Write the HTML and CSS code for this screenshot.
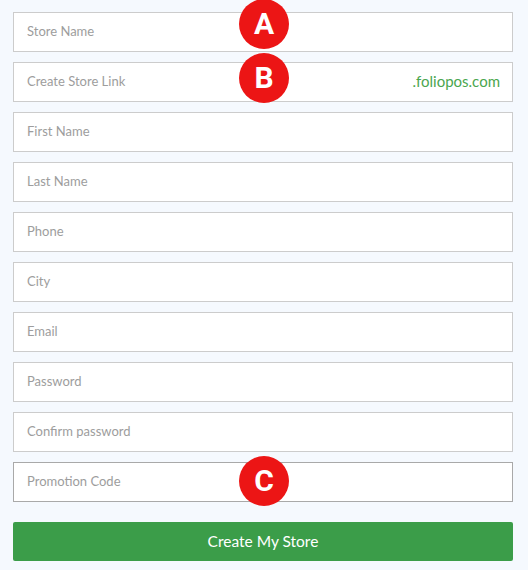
FILE: index.html
```html
<!DOCTYPE html>
<html lang="en">
<head>
  <meta charset="UTF-8" />
  <meta name="viewport" content="width=device-width, initial-scale=1.0" />
  <title>Create Store</title>
  <link rel="stylesheet" href="styles.css">
</head>
<body>
  <form class="signup">
    <div class="field">
      <input type="text" placeholder="Store Name">
      <span class="badge badge-a">A</span>
    </div>
    <div class="field">
      <input type="text" placeholder="Create Store Link">
      <span class="suffix">.foliopos.com</span>
      <span class="badge badge-b">B</span>
    </div>
    <div class="field"><input type="text" placeholder="First Name"></div>
    <div class="field"><input type="text" placeholder="Last Name"></div>
    <div class="field"><input type="text" placeholder="Phone"></div>
    <div class="field"><input type="text" placeholder="City"></div>
    <div class="field"><input type="text" placeholder="Email"></div>
    <div class="field"><input type="password" placeholder="Password"></div>
    <div class="field"><input type="password" placeholder="Confirm password"></div>
    <div class="field">
      <input type="text" class="active" placeholder="Promotion Code">
      <span class="badge badge-c">C</span>
    </div>
    <button type="button" class="submit">Create My Store</button>
  </form>
</body>
</html>
```

FILE: styles.css
```css
body {
  margin: 0;
  background: #f5f9fe;
  font-family: Lato, "Open Sans", sans-serif;
}
.signup {
  width: 500px;
  padding: 12px 0 0 13px;
}
.field {
  position: relative;
  margin-bottom: 10px;
}
.field input {
  display: block;
  box-sizing: border-box;
  width: 100%;
  height: 40px;
  padding: 0 13px 2px;
  border: 1px solid #cccccc;
  background: #fff;
  font-family: inherit;
  font-size: 13px;
  color: #555;
  outline: none;
}
.field input::placeholder {
  color: #9d9d9d;
}
.field input.active {
  border-color: #a9a9a9;
}
.suffix {
  position: absolute;
  right: 13px;
  top: 10px;
  font-size: 15px;
  color: #4aa64f;
}
.badge {
  position: absolute;
  left: 226px;
  width: 50px;
  height: 50px;
  border-radius: 50%;
  background: #ec1515;
  color: #fff;
  font-family: Roboto, sans-serif;
  font-weight: 700;
  font-size: 30px;
  line-height: 50px;
  text-align: center;
}
.badge-a { top: -13px; }
.badge-b { top: -9px; }
.badge-c { top: -6px; }
.submit {
  display: block;
  width: 100%;
  height: 39px;
  margin-top: 20px;
  padding-bottom: 2px;
  border: none;
  border-radius: 2px;
  background: #3b9d49;
  color: #fff;
  font-family: inherit;
  font-size: 15.5px;
  cursor: pointer;
}
```
